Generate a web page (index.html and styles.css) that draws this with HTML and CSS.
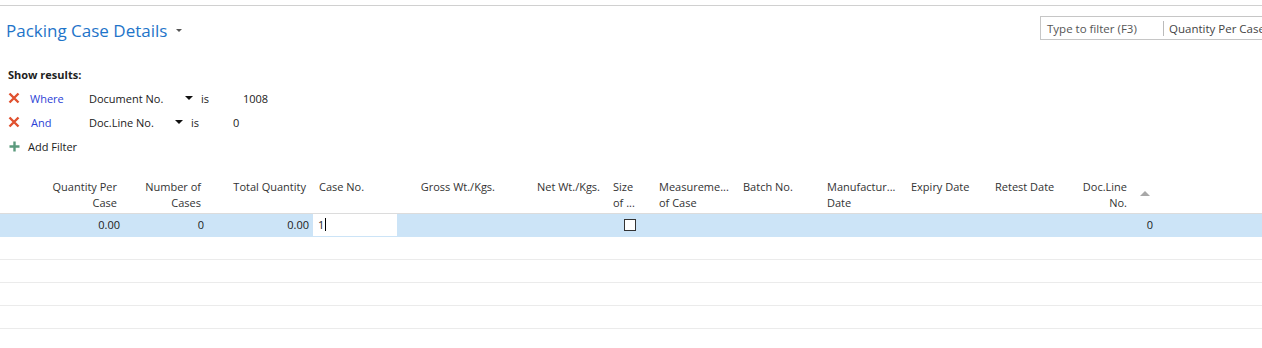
FILE: index.html
```html
<!DOCTYPE html>
<html lang="en">
<head>
  <meta charset="UTF-8">
  <title>Packing Case Details</title>
  <link rel="stylesheet" href="styles.css">
</head>
<body>

  <div class="top-line"></div>

  <div class="page-head">
    <h1 class="page-title">Packing Case Details <span class="title-caret"></span></h1>
    <div class="filter-box">
      <span class="filter-hint">Type to filter (F3)</span>
      <span class="filter-field">Quantity Per Case</span>
    </div>
  </div>

  <div class="filters">
    <div class="filters-label">Show results:</div>
    <div class="filter-row">
      <svg class="remove" width="12" height="12" viewBox="0 0 12 12"><path d="M1.5 1.5L10.5 10.5M10.5 1.5L1.5 10.5" /></svg>
      <span class="op op-where">Where</span>
      <span class="field">Document No.</span>
      <span class="caret"></span>
      <span class="is">is</span>
      <span class="value">1008</span>
    </div>
    <div class="filter-row">
      <svg class="remove" width="12" height="12" viewBox="0 0 12 12"><path d="M1.5 1.5L10.5 10.5M10.5 1.5L1.5 10.5" /></svg>
      <span class="op op-and">And</span>
      <span class="field field-short">Doc.Line No.</span>
      <span class="caret"></span>
      <span class="is">is</span>
      <span class="value">0</span>
    </div>
    <div class="filter-row add-row">
      <svg class="plus" width="11" height="11" viewBox="0 0 11 11"><path d="M5.5 0.5V10.5M0.5 5.5H10.5" /></svg>
      <span>Add Filter</span>
    </div>
  </div>

  <div class="grid">
    <div class="grid-head">
      <div class="col c1 right">Quantity Per<br>Case</div>
      <div class="col c2 right">Number of<br>Cases</div>
      <div class="col c3 right">Total Quantity</div>
      <div class="col c4">Case No.</div>
      <div class="col c5 right">Gross Wt./Kgs.</div>
      <div class="col c6 right">Net Wt./Kgs.</div>
      <div class="col c7">Size<br>of ...</div>
      <div class="col c8">Measureme...<br>of Case</div>
      <div class="col c9">Batch No.</div>
      <div class="col c10">Manufactur...<br>Date</div>
      <div class="col c11">Expiry Date</div>
      <div class="col c12">Retest Date</div>
      <div class="col c13 right sorted">Doc.Line<br>No.<span class="sort-arrow"></span></div>
    </div>

    <div class="grid-row selected">
      <div class="col c1 right">0.00</div>
      <div class="col c2 right">0</div>
      <div class="col c3 right">0.00</div>
      <div class="col c4 editing">1<span class="cursor"></span></div>
      <div class="col c5"></div>
      <div class="col c6"></div>
      <div class="col c7 center"><span class="checkbox"></span></div>
      <div class="col c8"></div>
      <div class="col c9"></div>
      <div class="col c10"></div>
      <div class="col c11"></div>
      <div class="col c12"></div>
      <div class="col c13 right">0</div>
    </div>
    <div class="grid-row"></div>
    <div class="grid-row"></div>
    <div class="grid-row"></div>
    <div class="grid-row"></div>
  </div>

</body>
</html>
```

FILE: styles.css
```css
body {
  margin: 0;
  font-family: 'Segoe UI', 'Open Sans', sans-serif;
  font-size: 11px;
  color: #212121;
  background-color: #fff;
}

.top-line {
  height: 5px;
  border-bottom: 1px solid #d0d0d0;
}

.page-head {
  display: flex;
  justify-content: space-between;
  align-items: flex-start;
  padding-top: 10px;
}

.page-title {
  margin: 3px 0 0 6px;
  font-size: 17px;
  font-weight: normal;
  color: #1e74c9;
  display: flex;
  align-items: center;
}

.title-caret {
  margin-left: 9px;
  border-left: 3px solid transparent;
  border-right: 3px solid transparent;
  border-top: 3px solid #555;
}

.filter-box {
  width: 230px;
  height: 22px;
  margin-right: -10px;
  border: 1px solid #c6c6c6;
  display: flex;
  align-items: center;
  color: #444;
  white-space: nowrap;
  overflow: hidden;
  font-size: 11.5px;
}

.filter-hint {
  width: 116px;
  padding-left: 6px;
  color: #555;
}

.filter-field {
  border-left: 1px solid #bbb;
  padding-left: 5px;
  line-height: 15px;
}

.filters {
  padding: 25px 0 0 8px;
}

.filters-label {
  font-weight: bold;
  height: 19px;
}

.filter-row {
  display: flex;
  align-items: center;
  height: 24px;
}

.remove {
  width: 12px;
  margin-right: 10px;
  fill: none;
  stroke: #e0512f;
  stroke-width: 2.4;
}

.op {
  width: 59px;
  color: #2b3fd6;
}

.op-and {
  padding-left: 1px;
  width: 58px;
}

.field {
  width: 96px;
}

.field-short {
  width: 86px;
}

.caret {
  border-left: 4px solid transparent;
  border-right: 4px solid transparent;
  border-top: 4px solid #111;
  margin-right: 8px;
}

.is {
  width: 42px;
}

.add-row .plus {
  margin: 0 8px 0 1px;
  fill: none;
  stroke: #5b9a7d;
  stroke-width: 2.4;
}

.grid {
  margin-top: 21px;
}

.grid-head,
.grid-row {
  display: grid;
  grid-template-columns: 124px 84px 105px 84px 105px 105px 46px 84px 84px 84px 84px 84px 84px;
}

.grid-head {
  height: 34px;
  border-bottom: 1px solid #dcdcdc;
  line-height: 16px;
  color: #333;
}

.grid-head .col {
  padding: 0 6px;
}

.grid-head .right {
  padding-right: 7px;
}

.grid-row {
  height: 22px;
  border-bottom: 1px solid #ebebeb;
  line-height: 22px;
}

.grid-row .col {
  padding: 0 5px;
}

.grid-row .right {
  padding-right: 4px;
}

.grid-row.selected {
  background-color: #cce4f7;
  border-bottom-color: #cce4f7;
}

.col {
  white-space: nowrap;
  overflow: hidden;
}

.right {
  text-align: right;
}

.center {
  text-align: center;
}

.grid-head .sorted {
  padding-right: 30px;
  position: relative;
}

.sort-arrow {
  position: absolute;
  right: 7px;
  top: 12px;
  border-left: 5px solid transparent;
  border-right: 5px solid transparent;
  border-bottom: 5px solid #a8a8a8;
}

.editing {
  background-color: #fff;
}

.cursor {
  display: inline-block;
  width: 1px;
  height: 13px;
  margin-left: 1px;
  vertical-align: -2px;
  background-color: #000;
}

.checkbox {
  display: inline-block;
  width: 10px;
  height: 10px;
  border: 1px solid #333;
  background-color: #fff;
  vertical-align: -2px;
}
```
